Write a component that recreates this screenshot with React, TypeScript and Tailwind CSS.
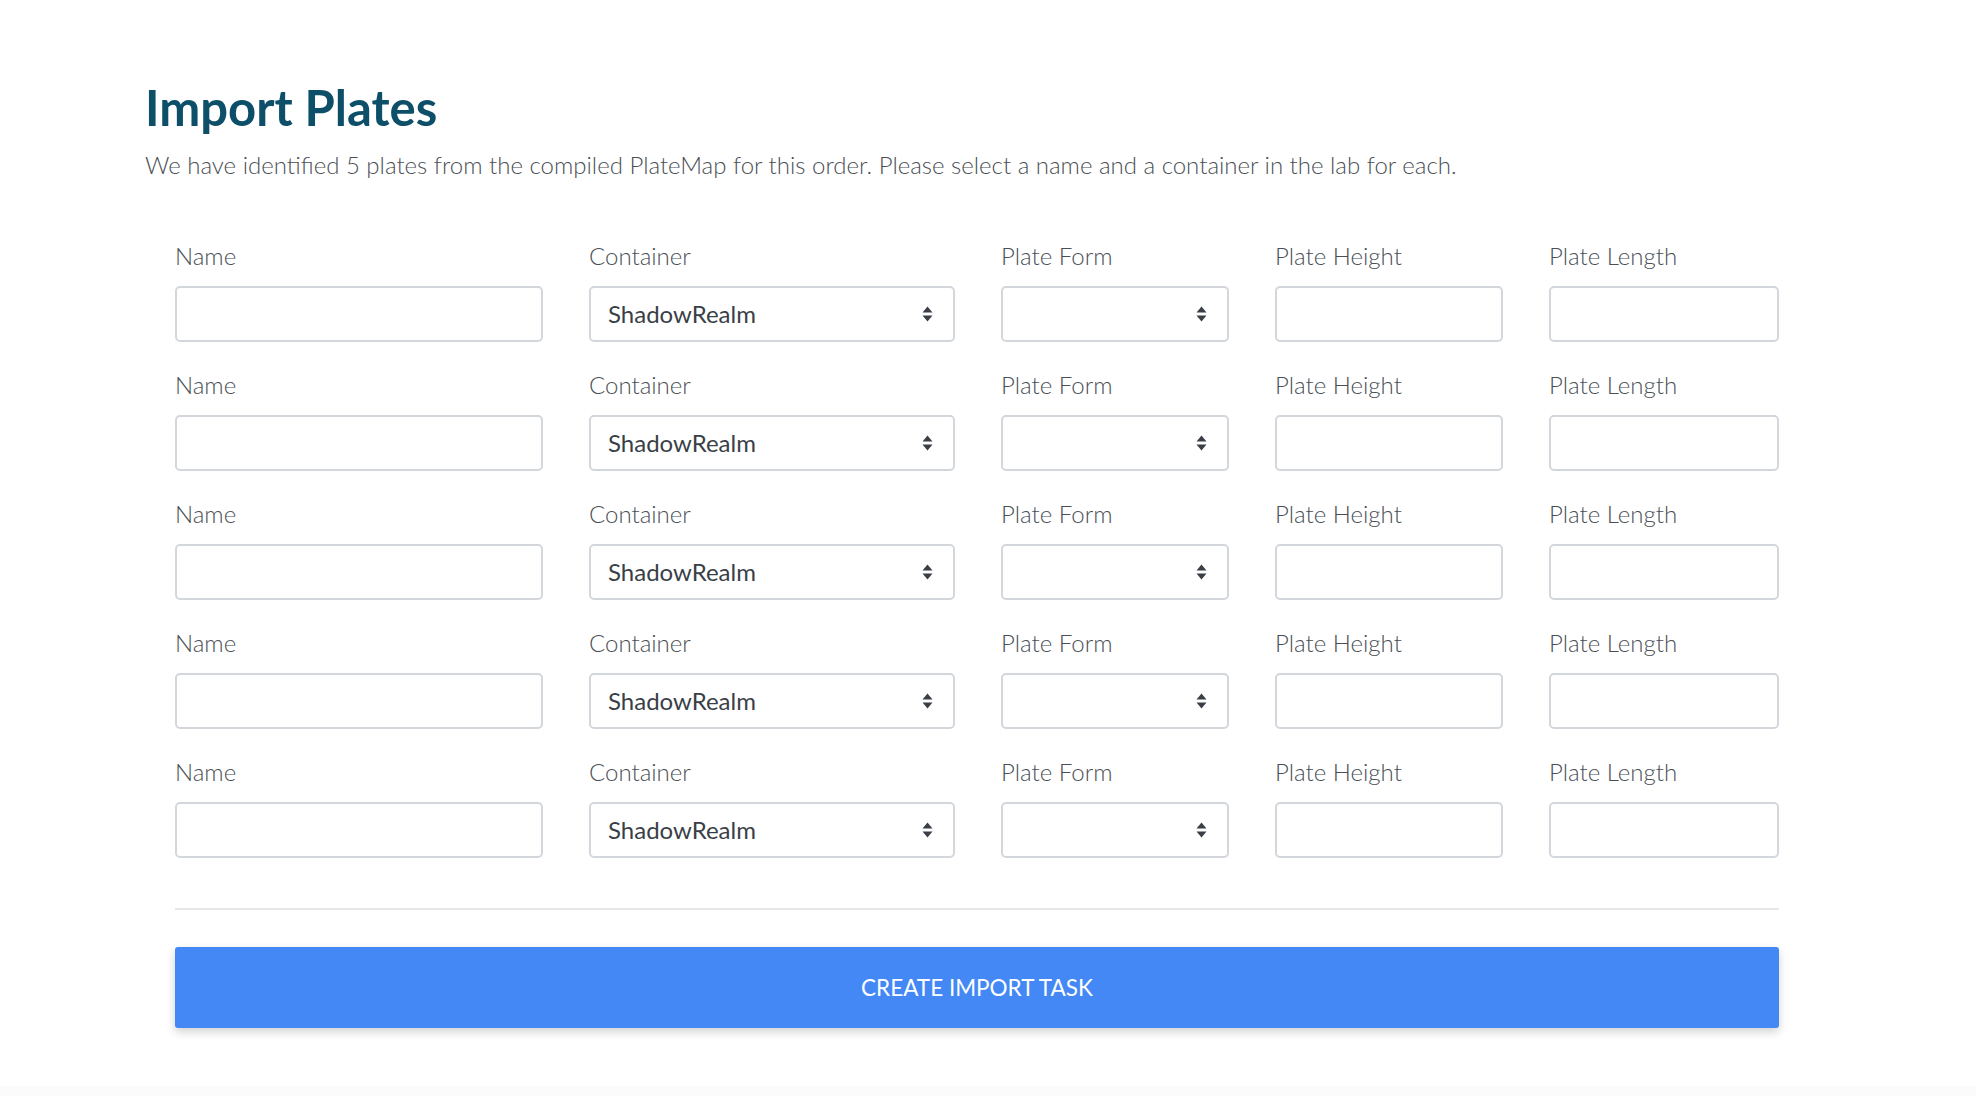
import React from "react";

const Arrows = () => (
  <svg width="11" height="17" viewBox="0 0 11 17" className="absolute right-[20px] top-1/2 -translate-y-1/2">
    <path d="M5.5 1 L10.5 7 H0.5 Z" fill="#3a3f47" />
    <path d="M5.5 16 L10.5 10 H0.5 Z" fill="#3a3f47" />
  </svg>
);

const Field = ({ label, children }: { label: string; children: React.ReactNode }) => (
  <div className="flex flex-col">
    <div className="h-[33px] leading-[33px] text-[24px] font-light text-[#4a4f55]">{label}</div>
    <div className="mt-[14px]">{children}</div>
  </div>
);

const Input = () => (
  <div className="h-[56px] rounded-[5px] border-2 border-[#d3d7dc] bg-white" />
);

const Select = ({ value }: { value?: string }) => (
  <div className="relative h-[56px] rounded-[5px] border-2 border-[#d3d7dc] bg-white flex items-center pl-[17px] text-[24px] font-normal text-[#3a3f47]">
    {value}
    <Arrows />
  </div>
);

export default function App() {
  const rows = [0, 1, 2, 3, 4];
  return (
    <div className="min-h-[1096px] w-full bg-[#fbfbfb]" style={{ fontFamily: "Lato, 'Open Sans', sans-serif" }}>
      <div className="min-h-[1086px] bg-white pl-[145px] pt-[78px]">
        <h1 className="text-[49px] font-bold leading-[58px] text-[#0d4f69]">Import Plates</h1>
        <p className="mt-[15px] text-[24px] font-light leading-[28px] text-[#4a4f55]">
          We have identified 5 plates from the compiled PlateMap for this order. Please select a name and a container in the lab for each.
        </p>
        <div className="ml-[30px] mt-[60px] w-[1604px]">
          <div className="flex flex-col gap-[26px]">
            {rows.map((r) => (
              <div key={r} className="grid grid-cols-[368px_366px_228px_228px_230px] gap-x-[46px]">
                <Field label="Name"><Input /></Field>
                <Field label="Container"><Select value="ShadowRealm" /></Field>
                <Field label="Plate Form"><Select /></Field>
                <Field label="Plate Height"><Input /></Field>
                <Field label="Plate Length"><Input /></Field>
              </div>
            ))}
          </div>
          <div className="mt-[50px] h-[2px] bg-[#e6e7e9]" />
          <button className="mt-[37px] flex h-[81px] w-full items-center justify-center rounded-[3px] bg-[#4388f5] text-[22.5px] font-normal text-white shadow-[0_4px_10px_rgba(0,0,0,0.18)]">
            CREATE IMPORT TASK
          </button>
        </div>
      </div>
    </div>
  );
}
